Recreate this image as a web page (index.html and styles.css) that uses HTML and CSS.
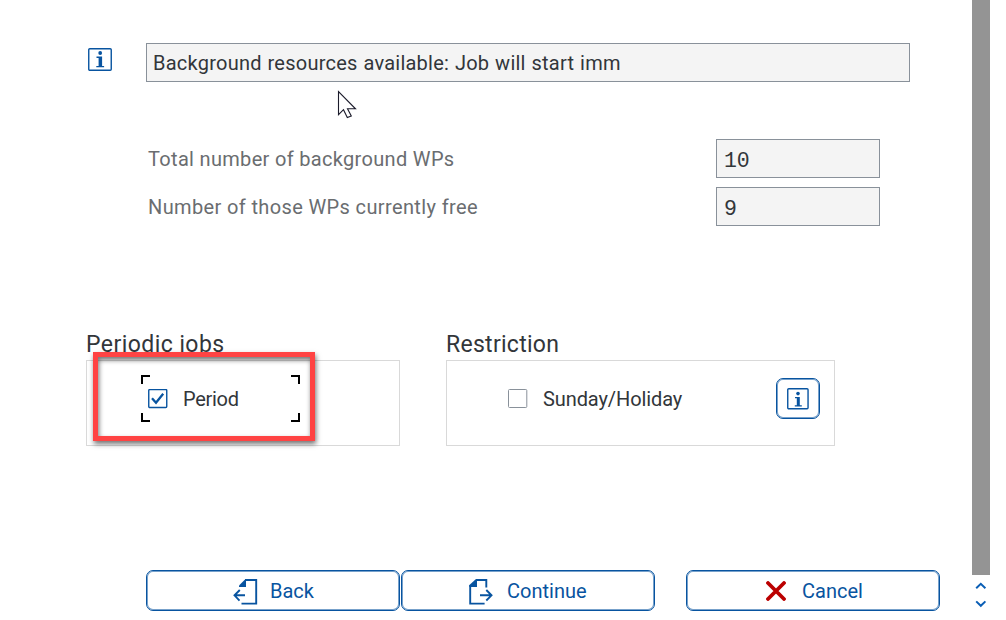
FILE: index.html
```html
<!DOCTYPE html>
<html lang="en">
<head>
<meta charset="utf-8">
<title>Start Time</title>
<link rel="stylesheet" href="styles.css">
</head>
<body>
<div class="window">
  <main class="dialog">
    <div class="status-row">
      <svg class="info-icon" width="24" height="24" viewBox="0 0 24 24"><rect class="line" x=".75" y=".75" width="22.5" height="21.5" rx="1"/><circle class="solid" cx="12.2" cy="5" r="1.9"/><path class="solid" d="M8.5 8.5h5.6v9.4h2v1.4H8.3v-1.4h2.3V9.9H8.5z"/></svg>
      <div class="field field-status"><span class="t-status">Background resources available: Job will start imm</span></div>
    </div>
    <div class="counts">
      <div class="count-row"><span class="label t-total">Total number of background WPs</span><div class="field mono">10</div></div>
      <div class="count-row"><span class="label t-free">Number of those WPs currently free</span><div class="field mono">9</div></div>
    </div>
    <div class="groups">
      <section class="group group-period">
        <h2 class="t-periodic">Periodic jobs</h2>
        <div class="panel">
          <svg class="checkbox" width="20" height="20" viewBox="0 0 20 20"><rect class="line" x=".75" y=".5" width="18" height="18" rx="1"/><path class="check" d="M4 9.2l4 4.6 7.2-9"/></svg>
          <span class="t-period">Period</span>
          <svg class="focus" width="159" height="47" viewBox="0 0 159 47"><path d="M1 9V1h8M150 1h8v8M1 38v8h8M150 46h8v-8"/></svg>
          <div class="highlight"></div>
        </div>
      </section>
      <section class="group group-restriction">
        <h2 class="t-restriction">Restriction</h2>
        <div class="panel">
          <svg class="checkbox" width="20" height="20" viewBox="0 0 20 20"><rect class="box" x=".5" y=".5" width="18.3" height="18" rx="1"/></svg>
          <span class="t-sunday">Sunday/Holiday</span>
          <button class="info-button" aria-label="Information"><svg width="22" height="22" viewBox="0 0 22 22"><rect class="line" x=".75" y=".75" width="20.3" height="20" rx="1"/><circle class="solid" cx="11" cy="5.6" r="1.8"/><path class="solid" d="M8 8.9h4.8v8.3h2v1.4H7.8v-1.4h2v-6.9H8z"/></svg></button>
        </div>
      </section>
    </div>
    <div class="actions">
      <button class="action back"><svg width="25" height="26" viewBox="0 0 25 26"><path class="stroke" d="M12 1h11.2v23.6H8.5M1.5 16.3H12M6.8 11l-5.3 5.3L6.5 21.6"/><path class="solid" d="M13 0v8H6V6.5L11.5 1z"/></svg><span>Back</span></button>
      <button class="action continue"><svg width="24" height="26" viewBox="0 0 24 26"><path class="stroke" d="M7 1h10.3v7.5M1.2 6v18.6h14.4M11 16.3h11M17.3 11l5.2 5.3-5.2 5.2"/><path class="solid" d="M7 0h1v8H.4V6z"/></svg><span>Continue</span></button>
      <button class="action cancel"><svg width="20" height="20" viewBox="0 0 20 20"><path class="cross" d="M2 2l16 16M18 2L2 18"/></svg><span>Cancel</span></button>
    </div>
    <svg class="pointer" width="20" height="30" viewBox="0 0 20 30"><path d="M1.5 1.5v23.2l5-5 3.8 7.8 4-1.6-3.8-7.1h8z"/></svg>
  </main>
  <aside class="scrollbar">
    <div class="thumb"></div>
    <svg width="18" height="38" viewBox="0 0 18 38"><path class="chevron" d="M4.2 13.3l4.6-4.4 4.6 4.4M4.2 26.4l4.6 4.4 4.6-4.4"/></svg>
  </aside>
</div>
</body>
</html>
```
FILE: styles.css
```css
* { box-sizing: border-box; }
body { margin: 0; background: #fff; color: #32363a; font: 20px/24px Roboto, "Liberation Sans", sans-serif; overflow: hidden; }
svg { display: block; fill: none; flex: none; }
span, h2 { white-space: nowrap; }
button { font: inherit; color: #0854a0; background: #fff; border: 1px solid #0854a0; box-shadow: inset 0 0 0 1px rgba(8,84,160,.55); border-radius: 7px; padding: 0; display: flex; align-items: center; }
.window { display: flex; width: 1006px; height: 620px; }
.dialog { position: relative; width: 972px; padding-top: 43px; }
.scrollbar { width: 18px; }
.thumb { height: 575px; background: #949494; }
.line { stroke: #0854a0; stroke-width: 1.4; }
.box { stroke: #89919a; }
.solid { fill: #0854a0; }
.stroke { stroke: #0854a0; stroke-width: 1.9; }
.check { stroke: #0854a0; stroke-width: 2.3; }
.cross { stroke: #bb0000; stroke-width: 3.8; stroke-linecap: round; }
.chevron { stroke: #0a5eb5; stroke-width: 2; }
.status-row { display: flex; padding-left: 88px; gap: 34px; }
.info-icon { margin-top: 5px; }
.field { height: 39px; border: 1px solid #89919a; background: #f4f4f4; display: flex; align-items: center; padding-left: 6px; }
.field-status { width: 764px; }
.t-status { letter-spacing: .24px; word-spacing: .6px; }
.t-total { letter-spacing: .32px; }
.t-free { letter-spacing: .37px; }
.t-periodic { letter-spacing: .45px; }
.t-restriction { letter-spacing: .28px; }
.t-period { letter-spacing: -.3px; }
.t-sunday { letter-spacing: -.1px; }
.mono { width: 164px; font-family: "Liberation Mono", monospace; font-size: 21.5px; letter-spacing: -.2px; padding: 5px 0 0 7px; }
.counts { margin-top: 57px; padding-left: 148px; display: flex; flex-direction: column; gap: 9px; }
.count-row { display: flex; align-items: center; width: 732px; justify-content: space-between; }
.label { color: #6a6d70; }
.groups { display: flex; gap: 46px; padding-left: 86px; margin-top: 104px; }
.group h2 { margin: 0; height: 30px; font-size: 23px; line-height: 30px; font-weight: 400; }
.group-period { width: 314px; }
.group-restriction { width: 389px; }
.panel { position: relative; height: 86px; border: 1px solid #d9d9d9; display: flex; align-items: center; padding: 0 14px 9px 61px; }
.panel span { margin-left: 15px; }
.focus { position: absolute; left: 54px; top: 14px; }
.focus path { stroke: #000; stroke-width: 2; }
.highlight { position: absolute; left: 6px; top: -9px; width: 222px; height: 89px; border: 5px solid #ff4343; box-shadow: 1px 3px 5px rgba(0,0,0,.55), inset 1px 3px 5px rgba(0,0,0,.55); }
.info-button { width: 44px; height: 41px; justify-content: center; margin-left: auto; }
.actions { display: flex; margin-top: 124px; padding-left: 146px; }
.action { width: 254px; height: 41px; }
.action svg { margin-top: 2px; }
.back { padding-left: 86px; gap: 12px; }
.continue { margin-left: 1px; padding-left: 67px; gap: 14px; }
.cancel { margin-left: 31px; padding-left: 79px; gap: 16px; }
.cancel svg { margin-top: 0; }
.pointer { position: absolute; left: 337px; top: 90px; }
.pointer path { fill: #fff; stroke: #1b1b2b; stroke-width: 1.1; }
```
